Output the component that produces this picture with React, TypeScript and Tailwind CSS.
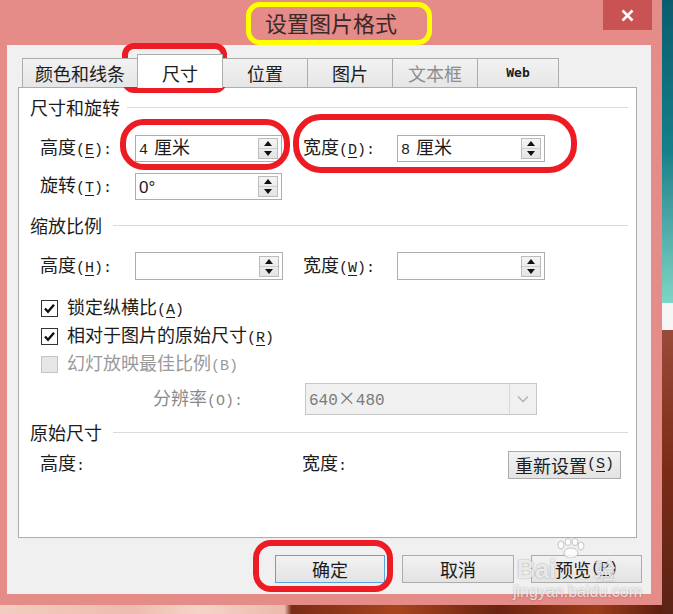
import React from 'react';

const Key = ({ k, colon = true }: { k: string; colon?: boolean }) => (
  <span className="font-['Liberation_Mono',monospace] text-[15px]">
    (<span className="underline underline-offset-[3px]">{k}</span>){colon ? ':' : ''}
  </span>
);

const Mono = ({ children }: { children: React.ReactNode }) => (
  <span className="font-['Liberation_Mono',monospace] text-[15px]">{children}</span>
);

const Arrows = () => (
  <div className="flex h-[21px] w-[20px] flex-col border border-[#bcbcbc] bg-gradient-to-b from-[#f4f4f4] to-[#e4e4e4]">
    <div className="flex flex-1 items-center justify-center border-b border-[#cfcfcf]">
      <div className="h-0 w-0 border-x-[4px] border-b-[5px] border-x-transparent border-b-[#111]" />
    </div>
    <div className="flex flex-1 items-center justify-center">
      <div className="h-0 w-0 border-x-[4px] border-t-[5px] border-x-transparent border-t-[#111]" />
    </div>
  </div>
);

const SpinBox = ({ value, w, h = 'h-[27px]' }: { value?: React.ReactNode; w: string; h?: string }) => (
  <div className={`flex items-center border border-[#abadb3] bg-white pl-[3px] pr-[3px] ${w} ${h}`}>
    <div className="flex-1 text-[18px] leading-[20px]">{value}</div>
    <Arrows />
  </div>
);

const Section = ({ title, mt, gap }: { title: string; mt: string; gap: string }) => (
  <div className={`flex h-[20px] items-center pl-[11px] pr-[8px] ${mt}`}>
    <span className="text-[18px] leading-[20px]">{title}</span>
    <div className={`h-px flex-1 bg-[#dadada] ${gap}`} />
  </div>
);

const Check = ({ label, k, checked = true, disabled = false }: { label: string; k: string; checked?: boolean; disabled?: boolean }) => (
  <div className="flex h-[28px] items-center">
    {disabled ? (
      <div className="h-[17px] w-[17px] border border-[#c4c4c4] bg-[#e6e6e6]" />
    ) : (
      <div className="flex h-[17px] w-[17px] items-center justify-center border border-[#333] bg-white">
        {checked && (
          <svg width="13" height="13" viewBox="0 0 13 13">
            <path d="M2 6.5 L5 9.8 L11 2.8" fill="none" stroke="#111" strokeWidth="2.4" />
          </svg>
        )}
      </div>
    )}
    <span className={`ml-[9px] text-[18px] leading-[20px] ${disabled ? 'text-[#9a9a9a]' : ''}`}>
      {label}
      {disabled ? (
        <span className="font-['Liberation_Mono',monospace] text-[15px]">(B)</span>
      ) : (
        <Key k={k} colon={false} />
      )}
    </span>
  </div>
);

const Tab = ({ children, w, dim = false }: { children: React.ReactNode; w: string; dim?: boolean }) => (
  <div
    className={`-ml-px mt-[4px] flex h-[29px] items-center justify-center border border-b-0 border-[#acacac] bg-gradient-to-b from-[#f2f2f2] to-[#e6e6e6] text-[18px] leading-[20px] ${w} ${dim ? 'text-[#8d8d8d]' : ''}`}
  >
    {children}
  </div>
);

const Btn = ({ children, w, primary = false }: { children: React.ReactNode; w: string; primary?: boolean }) => (
  <div
    className={`flex h-[28px] items-center justify-center border bg-gradient-to-b from-[#f2f2f2] to-[#e3e3e3] text-[18px] leading-[20px] ${w} ${primary ? 'border-[#5aa2e6]' : 'border-[#acacac]'}`}
  >
    {children}
  </div>
);

export default function App() {
  return (
    <div className="relative flex h-[614px] w-[673px] overflow-hidden bg-white font-['Noto_Sans_CJK_SC',sans-serif] text-[#1c1c1c]">
      <div className="flex w-[662px] flex-col">
        <div className="flex h-[605px] flex-col bg-[#e58b88]">
          {/* title bar */}
          <div className="grid h-[45px] grid-cols-[1fr_auto_1fr]">
            <div />
            <div className="pt-[5px] text-[22px] leading-[34px] text-[#3d2828]">设置图片格式</div>
            <div className="flex justify-end pr-[10px]">
              <div className="flex h-[30px] w-[49px] items-center justify-center bg-[#c85352]">
                <svg width="13" height="13" viewBox="0 0 13 13">
                  <path d="M1.5 1.5 L11.5 11.5 M11.5 1.5 L1.5 11.5" stroke="#fff" strokeWidth="2.6" />
                </svg>
              </div>
            </div>
          </div>

          {/* client area */}
          <div className="ml-[7px] mr-[11px] flex h-[549px] flex-col bg-[#f0f0f0] pt-[9px]">
            {/* tabs */}
            <div className="relative z-10 -mb-px ml-[16px] flex h-[34px] items-start">
              <Tab w="w-[116px]">颜色和线条</Tab>
              <div className="-ml-px flex h-[34px] w-[86px] items-center justify-center border border-b-0 border-[#acacac] bg-white pt-[2px] text-[18px] leading-[20px]">
                尺寸
              </div>
              <Tab w="w-[86px]">位置</Tab>
              <Tab w="w-[86px]">图片</Tab>
              <Tab w="w-[86px]" dim>文本框</Tab>
              <Tab w="w-[82px]">
                <span className="font-['DejaVu_Sans_Mono',monospace] text-[13px] font-bold">Web</span>
              </Tab>
            </div>

            {/* panel */}
            <div className="ml-[11px] mr-[14px] flex h-[451px] flex-col border border-[#adadad] bg-white">
              <Section title="尺寸和旋转" mt="mt-[9px]" gap="ml-[7px]" />

              <div className="mt-[18px] flex h-[27px] items-center pl-[21px]">
                <div className="w-[95px] text-[18px] leading-[20px]">
                  高度<Key k="E" />
                </div>
                <SpinBox
                  w="w-[147px]"
                  value={
                    <>
                      <Mono>4</Mono>
                      <span className="ml-[6px]">厘米</span>
                    </>
                  }
                />
                <div className="ml-[21px] w-[94px] text-[18px] leading-[20px]">
                  宽度<Key k="D" />
                </div>
                <SpinBox
                  w="w-[148px]"
                  value={
                    <>
                      <Mono>8</Mono>
                      <span className="ml-[6px]">厘米</span>
                    </>
                  }
                />
              </div>

              <div className="mt-[11px] flex h-[27px] items-center pl-[21px]">
                <div className="w-[95px] text-[18px] leading-[20px]">
                  旋转<Key k="T" />
                </div>
                <SpinBox w="w-[147px]" value={<span className="font-['Liberation_Sans',sans-serif] text-[17px]">0°</span>} />
              </div>

              <Section title="缩放比例" mt="mt-[15px]" gap="ml-[11px]" />

              <div className="mt-[17px] flex h-[28px] items-center pl-[21px]">
                <div className="w-[95px] text-[18px] leading-[20px]">
                  高度<Key k="H" />
                </div>
                <SpinBox w="w-[148px]" h="h-[28px]" />
                <div className="ml-[20px] w-[94px] text-[18px] leading-[20px]">
                  宽度<Key k="W" />
                </div>
                <SpinBox w="w-[148px]" h="h-[28px]" />
              </div>

              <div className="mt-[14px] flex flex-col pl-[22px]">
                <Check label="锁定纵横比" k="A" />
                <Check label="相对于图片的原始尺寸" k="R" />
                <Check label="幻灯放映最佳比例" k="B" disabled />
              </div>

              <div className="mt-[5px] flex h-[32px] items-center pl-[134px]">
                <div className="w-[152px] text-[18px] leading-[20px] text-[#8a8a8a]">
                  分辨率<span className="font-['Liberation_Mono',monospace] text-[15px]">(O):</span>
                </div>
                <div className="flex h-[32px] w-[232px] items-center border border-[#c6c6c6] bg-[#f0f0f0]">
                  <div className="flex-1 pl-[3px] text-[18px] leading-[20px] text-[#7a7a7a]">
                    <span className="font-['Liberation_Mono',monospace] text-[16px]">640</span>×
                    <span className="font-['Liberation_Mono',monospace] text-[16px]">480</span>
                  </div>
                  <div className="flex h-full w-[27px] items-center justify-center border-l border-[#d8d8d8]">
                    <svg width="12" height="8" viewBox="0 0 12 8">
                      <path d="M1 1.5 L6 6.5 L11 1.5" fill="none" stroke="#b0b0b0" strokeWidth="1.3" />
                    </svg>
                  </div>
                </div>
              </div>

              <Section title="原始尺寸" mt="mt-[7px]" gap="ml-[11px]" />

              <div className="mt-[9px] flex h-[27px] items-center pl-[21px]">
                <div className="w-[262px] text-[18px] leading-[20px]">
                  高度<Mono>:</Mono>
                </div>
                <div className="w-[206px] text-[18px] leading-[20px]">
                  宽度<Mono>:</Mono>
                </div>
                <Btn w="w-[113px]">
                  重新设置<Key k="S" colon={false} />
                </Btn>
              </div>
            </div>

            {/* dialog buttons */}
            <div className="mt-[17px] flex h-[28px] justify-end gap-[17px] pr-[9px]">
              <Btn w="w-[110px]" primary>
                确定
              </Btn>
              <Btn w="w-[112px]">取消</Btn>
              <Btn w="w-[111px]">
                预览<Key k="P" colon={false} />
              </Btn>
            </div>
          </div>
        </div>
        {/* desktop photo showing under the window */}
        <div className="h-[9px] bg-[linear-gradient(90deg,#f2cdbf_0%,#eebbb0_20%,#f4d4c6_30%,#ecb9ae_43%,#7a2c16_44%,#a8451d_60%,#6a2412_75%,#9c3d1a_90%,#5c1f10_100%)]" />
      </div>

      <div className="flex w-[11px] flex-col">
        <div className="h-[303px] bg-gradient-to-b from-[#0b5d6c] via-[#15808a] to-[#7fd6c6]" />
        <div className="h-[27px] bg-[#f6f6f6]" />
        <div className="flex-1 bg-gradient-to-b from-[#9a4a38] via-[#7a2c18] to-[#5a2414]" />
      </div>

      {/* annotations */}
      <div className="pointer-events-none absolute left-[246px] top-[2px] h-[43px] w-[186px] rounded-[14px] border-[5px] border-[#ffff00]" />
      <div className="pointer-events-none absolute left-[122px] top-[43px] h-[50px] w-[105px] rounded-[12px] border-[6px] border-[#ed1c24]" />
      <div className="pointer-events-none absolute left-[120px] top-[119px] h-[51px] w-[170px] rounded-[24px] border-[6px] border-[#ed1c24]" />
      <div className="pointer-events-none absolute left-[293px] top-[114px] h-[59px] w-[284px] rounded-[28px] border-[6px] border-[#ed1c24]" />
      <div className="pointer-events-none absolute left-[253px] top-[540px] h-[52px] w-[140px] rounded-[18px] border-[6px] border-[#ed1c24]" />

      {/* watermark */}
      <div className="pointer-events-none absolute left-[513px] top-[538px] flex flex-col items-start text-white/75 [text-shadow:0_0_2px_rgba(0,0,0,0.35)]">
        <svg width="34" height="20" viewBox="0 0 34 20" className="ml-[40px] opacity-80">
          <g fill="#fff" stroke="#bbb" strokeWidth="1">
            <ellipse cx="8" cy="7" rx="3" ry="4" />
            <ellipse cx="15" cy="4" rx="3" ry="3.5" />
            <ellipse cx="22" cy="4" rx="3" ry="3.5" />
            <ellipse cx="28" cy="8" rx="3" ry="4" />
            <ellipse cx="18" cy="15" rx="7" ry="5" />
          </g>
        </svg>
        <div className="-mt-[2px] flex items-end font-['Liberation_Sans',sans-serif] text-[25px] font-bold leading-[26px]">
          <span className="ml-[4px]">Bai</span>
          <span className="ml-[38px] font-['Noto_Sans_CJK_SC',sans-serif] text-[22px] font-normal">验</span>
        </div>
        <div className="font-['Liberation_Sans',sans-serif] text-[16px] leading-[20px]">jingyan.baidu.com</div>
      </div>
    </div>
  );
}
